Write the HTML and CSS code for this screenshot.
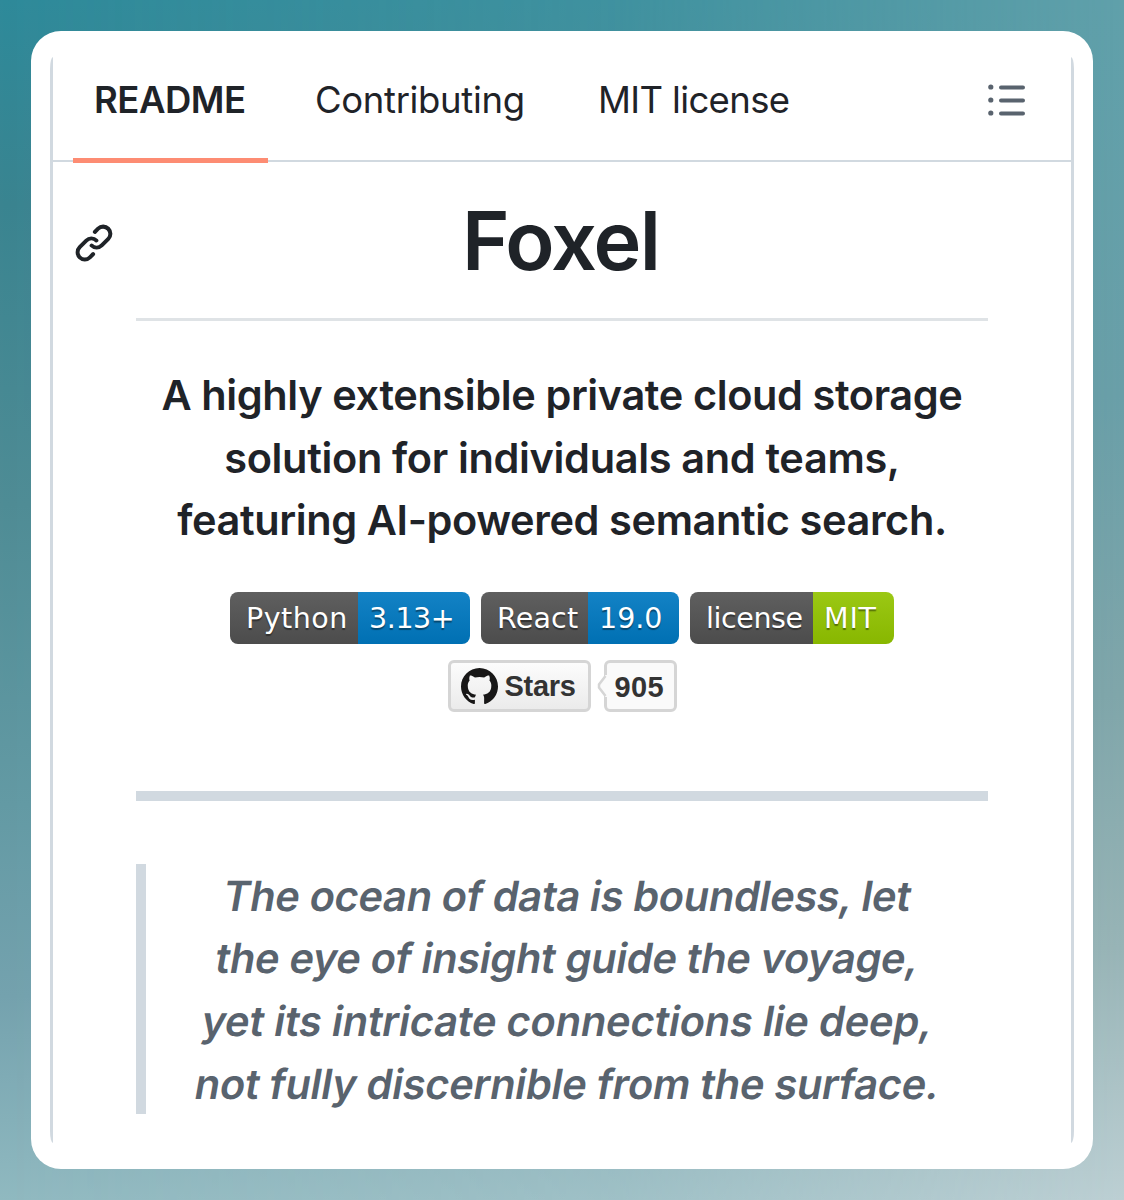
FILE: index.html
```html
<!DOCTYPE html>
<html lang="en">
<head>
<meta charset="utf-8">
<title>Foxel</title>
<link rel="stylesheet" href="styles.css">
</head>
<body>
<main class="card">
  <div class="panel">
    <nav class="tabs">
      <a class="tab tab-active">README</a>
      <a class="tab tab-contributing">Contributing</a>
      <a class="tab tab-license">MIT license</a>
      <svg class="outline-icon" viewBox="0 0 38 32" width="38" height="32">
        <g fill="#59636e"><circle cx="2.8" cy="3" r="2.6"/><circle cx="2.8" cy="16" r="2.6"/><circle cx="2.8" cy="29" r="2.6"/></g>
        <g stroke="#59636e" stroke-width="4" stroke-linecap="round"><path d="M13 3.6h22M13 16.6h22M13 29.6h22"/></g>
      </svg>
    </nav>
    <article class="readme">
      <header class="title-row">
        <svg class="link-icon" viewBox="0 0 16 16" width="42" height="42" fill="#1f2328"><path d="m7.775 3.275 1.25-1.25a3.5 3.5 0 1 1 4.95 4.95l-2.5 2.5a3.5 3.5 0 0 1-4.95 0 .751.751 0 0 1 .018-1.042.751.751 0 0 1 1.042-.018 1.998 1.998 0 0 0 2.83 0l2.5-2.5a2.002 2.002 0 0 0-2.83-2.83l-1.25 1.25a.751.751 0 0 1-1.042-.018.751.751 0 0 1-.018-1.042Zm-4.69 9.64a1.998 1.998 0 0 0 2.83 0l1.25-1.25a.751.751 0 0 1 1.042.018.751.751 0 0 1 .018 1.042l-1.25 1.25a3.5 3.5 0 1 1-4.95-4.95l2.5-2.5a3.5 3.5 0 0 1 4.95 0 .751.751 0 0 1-.018 1.042.751.751 0 0 1-1.042.018 1.998 1.998 0 0 0-2.83 0l-2.5 2.5a1.998 1.998 0 0 0 0 2.83Z"/></svg>
        <h1>Foxel</h1>
      </header>
      <p class="tagline"><span>A highly extensible private cloud storage</span><span class="t2">solution for individuals and teams,</span><span>featuring AI-powered semantic search.</span></p>
      <div class="badges">
        <div class="badge badge-python"><span class="key">Python</span><span class="value">3.13+</span></div>
        <div class="badge badge-react"><span class="key">React</span><span class="value">19.0</span></div>
        <div class="badge badge-mit"><span class="key">license</span><span class="value green">MIT</span></div>
      </div>
      <div class="stars">
        <div class="stars-button">
          <svg viewBox="0 0 16 16" width="37" height="37" fill="#181717"><path d="M8 0C3.58 0 0 3.58 0 8c0 3.54 2.29 6.53 5.47 7.59.4.07.55-.17.55-.38 0-.19-.01-.82-.01-1.49-2.01.37-2.53-.49-2.69-.94-.09-.23-.48-.94-.82-1.13-.28-.15-.68-.52-.01-.53.63-.01 1.08.58 1.23.82.72 1.21 1.87.87 2.33.66.07-.52.28-.87.51-1.07-1.78-.2-3.64-.89-3.64-3.95 0-.87.31-1.59.82-2.15-.08-.2-.36-1.02.08-2.12 0 0 .67-.21 2.2.82.64-.18 1.32-.27 2-.27s1.36.09 2 .27c1.53-1.04 2.2-.82 2.2-.82.44 1.1.16 1.92.08 2.12.51.56.82 1.27.82 2.15 0 3.07-1.87 3.75-3.65 3.95.29.25.54.73.54 1.48 0 1.07-.01 1.93-.01 2.2 0 .21.15.46.55.38A8.01 8.01 0 0 0 16 8c0-4.42-3.58-8-8-8Z"/></svg>
          <span>Stars</span>
        </div>
        <div class="stars-count">
          <svg class="notch" viewBox="0 0 12 24" width="12" height="24"><path d="M11 1H8.500L2 11v2l6.500 10H11" fill="#fafafa"/><path d="M8.500 2 2 10.500v3L8.500 22" fill="none" stroke="#d5d5d5" stroke-width="2.500"/></svg>
          <span>905</span>
        </div>
      </div>
      <hr>
      <blockquote><span class="q1">The ocean of data is boundless, let</span><span class="q2">the eye of insight guide the voyage,</span><span class="q3">yet its intricate connections lie deep,</span><span class="q4">not fully discernible from the surface.</span></blockquote>
    </article>
  </div>
</main>
</body>
</html>
```
FILE: styles.css
```css
* { box-sizing: border-box; }
body {
  position: relative;
  margin: 0;
  height: 1200px;
  padding: 31px;
  overflow: hidden;
  font-family: Inter, "Liberation Sans", sans-serif;
  color: #1f2328;
  background: linear-gradient(#2e8a9a, #3a8490 17%, #4f8c95 42%, #639aa4 67%, #74a2ae 83%, #90b9c0);
}
body::before {
  content: "";
  position: absolute;
  inset: 0;
  background: linear-gradient(#60a0aa, #6a9fa8 33%, #80a6aa 58%, #98b4b6 79%, #bccfd3);
  -webkit-mask-image: linear-gradient(to right, transparent, rgba(0, 0, 0, .35) 55%, #000);
  mask-image: linear-gradient(to right, transparent, rgba(0, 0, 0, .35) 55%, #000);
}
.card {
  position: relative;
  height: 1138px;
  padding: 26px 19px;
  border-radius: 30px;
  background: #fff;
}
.panel {
  height: 1086px;
  border: solid #d1d9e0;
  border-width: 0 3px;
  border-radius: 3px / 12px;
}
.tabs {
  display: flex;
  height: 105px;
  padding: 0 45px 0 20px;
  border-bottom: 2px solid #d1d9e0;
  font-size: 36.5px;
  line-height: 86px;
  white-space: nowrap;
}
.tab-active {
  width: 195px;
  height: 106px;
  padding-left: 21px;
  border-bottom: 5px solid #fd8c73;
  font-weight: 600;
  letter-spacing: -.5px;
}
.tab-contributing { margin-left: 47px; width: 283px; letter-spacing: -.35px; }
.tab-license { letter-spacing: -.65px; }
.outline-icon { margin: 27px 0 0 auto; }
.readme { padding: 0 83px; }
.title-row {
  display: flex;
  height: 159px;
  border-bottom: 3px solid #dfe3e6;
}
.link-icon { flex: none; margin: 59.5px 21px 0 -63px; }
h1 {
  flex: 1;
  margin: 31px 3px 0 0;
  font-size: 81px;
  line-height: 96px;
  font-weight: 600;
  letter-spacing: -1.8px;
  text-align: center;
}
p, blockquote { text-align: center; white-space: nowrap; line-height: 62.6px; letter-spacing: -.4px; }
p span, blockquote span { display: block; }
.tagline { margin: 43px 0 0; font-size: 41.5px; font-weight: 600; }
.t2 { letter-spacing: -.35px; }
.badges { display: flex; justify-content: center; gap: 11px; margin-top: 40px; }
.badge {
  display: flex;
  height: 52px;
  border-radius: 8px;
  overflow: hidden;
  color: #fff;
  font: 28.5px/54px "DejaVu Sans", sans-serif;
  text-shadow: 0 2px 1px rgba(1, 1, 1, .4);
  white-space: nowrap;
}
.key { padding-left: 16px; background: linear-gradient(#5f5f5f, #4c4c4c); }
.value { flex: 1; padding-left: 11px; background: linear-gradient(#1382c5, #0070b3); }
.green { background: linear-gradient(#9bc814, #88b700); }
.badge-python { width: 240px; }
.badge-python .key { width: 128px; letter-spacing: .5px; }
.badge-python .value { letter-spacing: -.4px; }
.badge-react { width: 198px; }
.badge-react .key { width: 107px; letter-spacing: .2px; }
.badge-mit { width: 204px; }
.badge-mit .key { width: 123px; letter-spacing: -.4px; }
.badge-mit .value { letter-spacing: .8px; }
.stars {
  display: flex;
  justify-content: center;
  gap: 13px;
  margin-top: 16px;
  font: bold 29px/48px "Liberation Sans", Arial, sans-serif;
  letter-spacing: -.3px;
  color: #333;
}
.stars-button, .stars-count {
  height: 52px;
  border: 3px solid #d5d5d5;
  border-radius: 6px;
  background: #fafafa;
}
.stars-button {
  display: flex;
  align-items: center;
  gap: 7px;
  width: 143px;
  padding: 1px 0 0 10px;
  background: linear-gradient(#fcfcfc, #ebebeb);
}
.stars-count { position: relative; width: 73px; padding-left: 8px; letter-spacing: .4px; }
.notch { position: absolute; left: -10px; top: 11px; }
hr { height: 10px; margin: 79px 0 63px; border: 0; background: #d1d9e0; }
blockquote {
  height: 250px;
  margin: 0;
  padding: 1px 0 0 1px;
  border-left: 10px solid #d1d9e0;
  color: #59636e;
  font-size: 41.5px;
  font-weight: 600;
}
/* Slants the upright letterforms, so f and a keep their roman shapes. */
blockquote span { transform: skewX(-10deg); }
.q1, .q2 { letter-spacing: -.31px; }
.q3 { letter-spacing: -.17px; }
.q4 { letter-spacing: -.25px; }
```
